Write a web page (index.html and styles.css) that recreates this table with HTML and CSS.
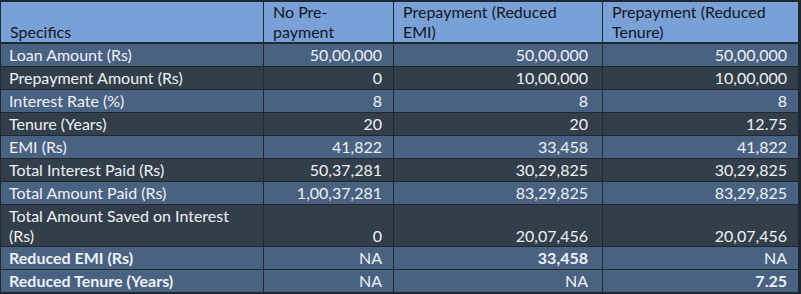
FILE: index.html
```html
<!DOCTYPE html>
<html>
<head>
<meta charset="utf-8">
<link rel="stylesheet" href="styles.css">
</head>
<body>
<table class="grid">
  <colgroup>
    <col class="c1"><col class="c2"><col class="c3"><col class="c4">
  </colgroup>
  <thead>
    <tr class="head">
      <th class="label">Specifics</th>
      <th>No Pre-<br>payment</th>
      <th>Prepayment (Reduced<br>EMI)</th>
      <th>Prepayment (Reduced<br>Tenure)</th>
    </tr>
  </thead>
  <tbody>
    <tr class="lt"><td class="label">Loan Amount (Rs)</td><td>50,00,000</td><td>50,00,000</td><td>50,00,000</td></tr>
    <tr class="dk"><td class="label">Prepayment Amount (Rs)</td><td>0</td><td>10,00,000</td><td>10,00,000</td></tr>
    <tr class="lt"><td class="label">Interest Rate (%)</td><td>8</td><td>8</td><td>8</td></tr>
    <tr class="dk"><td class="label">Tenure (Years)</td><td>20</td><td>20</td><td>12.75</td></tr>
    <tr class="lt"><td class="label">EMI (Rs)</td><td>41,822</td><td>33,458</td><td>41,822</td></tr>
    <tr class="dk"><td class="label">Total Interest Paid (Rs)</td><td>50,37,281</td><td>30,29,825</td><td>30,29,825</td></tr>
    <tr class="lt"><td class="label">Total Amount Paid (Rs)</td><td>1,00,37,281</td><td>83,29,825</td><td>83,29,825</td></tr>
    <tr class="dk tall"><td class="label">Total Amount Saved on Interest<br>(Rs)</td><td>0</td><td>20,07,456</td><td>20,07,456</td></tr>
    <tr class="lt bold-row first-bold"><td class="label">Reduced EMI (Rs)</td><td>NA</td><td class="strong">33,458</td><td>NA</td></tr>
    <tr class="lt bold-row"><td class="label">Reduced Tenure (Years)</td><td>NA</td><td>NA</td><td class="strong">7.25</td></tr>
  </tbody>
</table>
</body>
</html>
```
FILE: styles.css
```css
html, body {
  margin: 0;
  padding: 0;
  background: #1f2731;
}
.grid {
  width: 798px;
  border-collapse: collapse;
  table-layout: fixed;
  font-family: "Lato", "Open Sans", sans-serif;
  font-size: 16px;
  color: #eef1f5;
  border-top: 2px solid #1f2731;
  border-left: 1px solid #1f2731;
}
.c1 { width: 263px; }
.c2 { width: 130px; }
.c3 { width: 209px; }
.c4 { width: 196px; }
.grid th, .grid td {
  border: 1px solid #1f2731;
  padding: 0 11px 0 8px;
  line-height: 20px;
  white-space: nowrap;
}
.head th {
  background: #79a1d8;
  color: #12161c;
  font-weight: normal;
  text-align: left;
  vertical-align: bottom;
  height: 39px;
  padding-left: 9px;
  border-bottom: 2px solid #1f2731;
}
.grid td {
  text-align: right;
  height: 22px;
  vertical-align: middle;
}
.grid td:nth-child(3) { padding-right: 14px; }
.grid td.label {
  text-align: left;
  padding-left: 8px;
}
.lt td { background: #4a6282; }
.dk td { background: #333e4b; }
.tall td {
  height: 41px;
  vertical-align: bottom;
}
.tall td.label { vertical-align: middle; }
.bold-row td.label { font-weight: bold; }
.bold-row td { border-top-color: #3d5068; }
.first-bold td { border-top-color: #1f2731; }
.strong { font-weight: bold; }
```
